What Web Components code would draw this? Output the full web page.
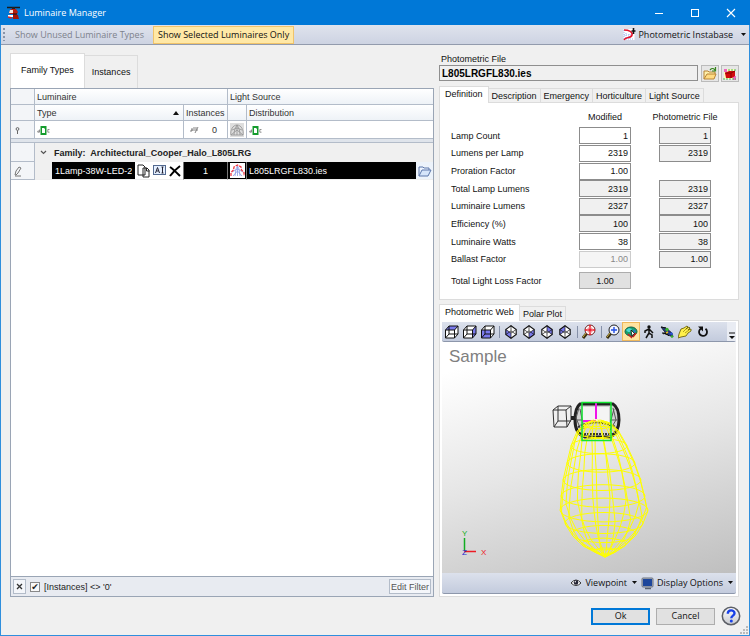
<!DOCTYPE html>
<html lang="en">
<head>
<meta charset="utf-8">
<title>Luminaire Manager</title>
<style>
html,body{margin:0;height:100%}
body{font:9px/12px "Liberation Sans",Arial,sans-serif;color:#111;background:#f0f0f0;--ui:"Open Sans","Noto Sans",sans-serif}
</style>
</head>
<body>
<luminaire-manager></luminaire-manager>
<script>
const isoCube=face=>`<path d="M6 .7L11.200 4.500v5L6 13.300.8 9.500v-5z" fill="#fff"/><path d="${face}" fill="#7a7aec"/><path d="M6 .7L11.200 4.500v5L6 13.300.8 9.500v-5z" fill="none" stroke="#111" stroke-width="1.100"/><path d="M.8 4.500L6 8l5.200-3.500M6 8v5.300M6 .7V6M.8 9.500L6 6l5.200 3.500" fill="none" stroke="#111" stroke-width=".7"/>`;
const cubeLines=`<path d="M1.500 5h9v8h-9zM5 1h9v8H5zM1.500 5L5 1M10.500 5L14 1M10.500 13L14 9M1.500 13L5 9" fill="none" stroke="#111"/>`;
const cubeBase=`<path d="M1.500 5L5 1h9v8l-3.500 4h-9z" fill="#fff"/>`;
const ICONS={
app:[13,13,`<path d="M0 1.500h13" stroke="#1a1a1a" stroke-width="1.500"/><path d="M5 1h3v2H5z" fill="#222"/><path d="M2 6l2-3h5l2 3-1 2H3z" fill="#b81e10"/><path d="M3 4h3v3H2z" fill="#f6e9e0"/><path d="M1 9h7v2H1z" fill="#fff"/><path d="M6 7l5 2 1 4H6z" fill="#a31509"/><path d="M1 11l4 1" stroke="#d22" stroke-width="1.500"/><path d="M6 8h4" stroke="#111"/>`],
min:[10,10,`<path d="M1 5.500h8" stroke="#fff"/>`],
max:[10,10,`<rect x="1.500" y="1.500" width="7" height="7" fill="none" stroke="#fff"/>`],
close:[10,10,`<path d="M1 1l8 8M9 1L1 9" stroke="#fff" stroke-width="1.100"/>`],
instabase:[13,13,`<rect x=".5" y="1" width="11" height="11" fill="#fff"/><path d="M1 2v9M3 5v5M6 6v5M1 11h9M1 7h8" stroke="#9bb4f2" stroke-dasharray="1 1"/><path d="M1 2c5 0 9 2 8 5-1 4-6 1-8 5" fill="none" stroke="#e3132c" stroke-width="1.600"/><path d="M10.500 0v6M8.500 3h4" stroke="#111" stroke-width="1.600"/>`],
caret:[6,4,`<path d="M0 0h5L2.500 3z" fill="#111"/>`],
up:[6,4,`<path d="M0 4L3 0l3 4z" fill="#111"/>`],
chev:[7,7,`<path d="M1 2l2.500 2.500L6 2" fill="none" stroke="#555" stroke-width="1.200"/>`],
pin:[7,7,`<circle cx="3.500" cy="2" r="1.400" fill="none" stroke="#666"/><path d="M3.500 3.500V7" stroke="#666"/>`],
pencil:[8,11,`<path d="M1 9l1-4 3-4 2 1-3 5-2 2zM1 10h6" fill="none" stroke="#777"/>`],
abc:[13,9,`<rect x="3.500" y="0" width="6" height="9" fill="#149b2d"/><path d="M5 2h2l1 1v4H5z" fill="#fff"/><path d="M2.500 3.500v2.700H.8V5H2.500M12.500 3.500h-1.700v2.700h1.700" fill="none" stroke="#777" stroke-width=".8"/>`],
ne:[9,8,`<path d="M2 2v3H0M1 4h7M3 2h4M5 7l3-6" fill="none" stroke="#777" stroke-width=".9"/>`],
polarGray:[14,14,`<rect width="14" height="14" fill="#dedede"/><path d="M1 12c-1-5 2-10 6-10s7 5 6 10zM4 12c0-4 1-7 3-10 2 3 3 6 3 10M2 7l5-2 5 2M1 12l6-5 6 5M7 2v10" fill="none" stroke="#999" stroke-width=".9"/>`],
polar:[15,15,`<rect width="15" height="15" fill="#fff"/><path d="M5 13l1-7 1.500-3L9 6l1 7M2 9l5.500-3L13 9M7.500 3v10M3 13l4.500-5 4.500 5" fill="none" stroke="#8a9ae4" stroke-width=".8"/><path d="M1 13V9.500L3.500 7 4 4l3.500-2L11 4l.5 3L14 9.500V13" fill="none" stroke="#f03540" stroke-width="1.300" stroke-dasharray="3 1"/>`],
copy:[13,14,`<path d="M1 1h5l2 2v8H1zM6 4h4l2 2v7H6z" fill="#fff" stroke="#222"/><path d="M9.500 4v3h3" fill="none" stroke="#222"/>`],
rename:[13,11,`<rect x=".5" y=".5" width="12" height="9" fill="#e4efff" stroke="#526990"/><path d="M2.500 8L4.500 2.500 6.500 8M3.500 6h2M9.500 2v6M8.500 2h2M8.500 8h2" fill="none" stroke="#223"/>`],
del:[12,12,`<path d="M1 2c3 2 5 4 10 9M11 1C7 4 4 7 1 11" fill="none" stroke="#000" stroke-width="2"/>`],
folderBlue:[14,12,`<path d="M1 11V2h4l1 1h5v3" fill="#edf4ff" stroke="#5c77aa"/><path d="M1 11l3-6h9l-3 6z" fill="#d6e5fa" stroke="#5c77aa"/>`],
folder:[14,14,`<path d="M1 12V4h4l1 1h6v3" fill="#fff0ac" stroke="#b88436"/><path d="M1 12l3-5h9l-2 5z" fill="#ffdb83" stroke="#b88436"/><path d="M7 3c2-2 3-2 5 0M12.500 0v4H9" fill="none" stroke="#37851d" stroke-width="1.200"/>`],
cubeRed:[14,14,`<path d="M1 2h11v10H1z" fill="#fffbbb"/><path d="M1 2h3v3H1zM10 9h3v4h-3z" fill="#ef65bd"/><path d="M2 6l4-2h6v5l-3 2H3z" fill="#d20b0b"/><path d="M2 6h6l4-2M8 6v5" fill="none" stroke="#8c0000"/><path d="M5 3h8M0 12h13" stroke="#48b85c" stroke-dasharray="2 1"/>`],
x:[7,7,`<path d="M1 1l5 5M6 1L1 6" stroke="#333" stroke-width="1.300"/>`],
cubeTop:[15,14,cubeBase+`<path d="M1.500 5L5 1h9l-3.500 4z" fill="#7a7aec"/>`+cubeLines],
cubeSide:[15,14,cubeBase+`<path d="M10.500 5L14 1v8l-3.500 4z" fill="#7a7aec"/>`+cubeLines],
cubeFront:[15,14,cubeBase+`<path d="M1.500 5h9v8h-9z" fill="#7a7aec"/>`+cubeLines],
iso1:[12,14,isoCube('M.8 4.500L6 8v5.300L.8 9.500z')],
iso2:[12,14,isoCube('M11.200 4.500L6 8v5.300l5.200-3.800z')],
iso3:[12,14,isoCube('M6 .7l5.200 3.800v5L6 6z')],
iso4:[12,14,isoCube('M6 .7L.8 4.500v5L6 6z')],
zoomExt:[14,15,`<path d="M1 14l4-5" stroke="#3b3010" stroke-width="3"/><path d="M1 13l3-4" stroke="#cfb54e"/><circle cx="8" cy="6" r="5" fill="#fff" stroke="#702020"/><path d="M8 1v10M3 6h10" stroke="#ee1525" stroke-width="1.500"/><circle cx="8" cy="6" r="2.500" fill="none" stroke="#f0727a"/>`],
zoom:[14,15,`<path d="M1 14l4-5" stroke="#3b3010" stroke-width="3"/><path d="M1 13l3-4" stroke="#cfb54e"/><circle cx="8" cy="6" r="5" fill="#f3f6ff" stroke="#222"/><path d="M8 3v6M5 6h6" stroke="#224fe5" stroke-width="1.400"/>`],
orbit:[14,14,`<ellipse cx="7" cy="6.500" rx="6" ry="4.500" fill="#16a06c" stroke="#14614a"/><path d="M2 5l3-2 3 1-2 3H4z" fill="#49d6cf"/><path d="M9 4l3 2-2 2z" fill="#2d6fd0"/><path d="M7 5l4 4-2 .5-1 2.500z" fill="#fff" stroke="#111" stroke-width=".8"/><path d="M4 9l4 4M12 8l-3 4" fill="none" stroke="#d01e1e" stroke-width="1.400"/>`],
walk:[10,14,`<circle cx="5" cy="2" r="1.700" fill="#111"/><path d="M5 4v5M1 8V6l4-2 4 4M5 8l-3 5M5 8l3 2v3" fill="none" stroke="#111" stroke-width="1.500"/>`],
fly:[14,14,`<path d="M1 2l5 1 6 5 1 4-5-2-4-4z" fill="#26377f" stroke="#17202e" stroke-width=".8"/><path d="M1 2l5 1M2 8h4l3 3M3 9l2-1" stroke="#111"/><circle cx="7" cy="4.500" r="1.700" fill="#39b32d"/><path d="M9 9l3-2 1 3z" fill="#2a57e0"/><path d="M6 8l2-1" stroke="#e8bb1c" stroke-width="1.500"/><path d="M11 12l2-1" stroke="#39b32d" stroke-width="2"/>`],
hand:[14,14,`<path d="M1 9l2-5 3-1 3-2 1 1-2 2 3-2 1 1-2 2 3-1v2l-3 2-2 3-5 1-3 1z" fill="#fff04a" stroke="#6d6310" stroke-width=".9"/><path d="M5 7l3-3M7 8l4-3" stroke="#9c8c14" stroke-width=".8"/>`],
rotate:[12,13,`<path d="M4 3.500a4 4 0 1 0 4.500.3" fill="none" stroke="#111" stroke-width="1.800"/><path d="M1 1.500h5v5z" fill="#111"/>`],
more:[8,9,`<path d="M1 2h6" stroke="#111"/><path d="M1 5h6L4 8z" fill="#111"/>`],
eye:[12,10,`<path d="M1 5q5-6 10 0-5 5-10 0z" fill="#fff" stroke="#333"/><circle cx="6" cy="4.500" r="2.300" fill="#223"/><circle cx="5.300" cy="3.800" r=".7" fill="#fff"/>`],
screen:[13,13,`<rect x="1" y="1" width="11" height="9" rx="1" fill="#aeb4bf" stroke="#6b7380"/><rect x="2" y="2" width="9" height="7" fill="#1d469b"/><path d="M4 11.500h6" stroke="#596270" stroke-width="1.500"/>`],
help:[20,20,`<defs><linearGradient id="g" x2="0" y2="1"><stop stop-color="#fff"/><stop offset="1" stop-color="#c7c9ce"/></linearGradient></defs><circle cx="10" cy="10" r="8.700" fill="url(#g)" stroke="#5c5f66" stroke-width="1.500"/><path d="M6.800 7.800c0-4.500 6.700-4.300 6.700-.6 0 2.500-3.200 2.300-3.200 5" fill="none" stroke="#1740e8" stroke-width="2.400"/><circle cx="10.300" cy="15" r="1.500" fill="#1740e8"/>`],
grip:[8,8,`<path d="M6 0h2v2H6zM3 3h2v2H3zM6 3h2v2H6zM0 6h2v2H0zM3 6h2v2H3zM6 6h2v2H6z" fill="#bbb"/>`]
};
const controls='button{font:inherit;color:inherit;margin:0;padding:0;border:0;background:none;display:inline-flex;align-items:center;justify-content:center;white-space:nowrap}input{font:inherit;color:inherit;min-width:0;margin:0}';
const define=(name,html,setup,base=controls)=>{
  const t=document.createElement('template');
  t.innerHTML='<style>*{box-sizing:border-box}'+base+'</style>'+html;
  customElements.define(name,class extends HTMLElement{
    constructor(){super();this.attachShadow({mode:'open'}).append(t.content.cloneNode(true));if(setup)setup(this,this.shadowRoot)}
  });
};
customElements.define('ui-icon',class extends HTMLElement{
  static observedAttributes=['name'];
  constructor(){super();this.attachShadow({mode:'open'})}
  attributeChangedCallback(){
    const [w,h,s]=ICONS[this.getAttribute('name')];
    this.shadowRoot.innerHTML=`<style>:host{display:inline-flex;flex:none}svg{display:block}</style><svg width="${w}" height="${h}" viewBox="0 0 ${w} ${h}" aria-hidden="true">${s}</svg>`;
  }
});

define('title-bar',`<style>
:host{display:flex;align-items:center;height:25px;background:#0078d7;color:#fff;font-family:var(--ui);padding:0 8px 0 7px;gap:4px}
h1{font:inherit;font-weight:400;margin:0;flex:1}
button{width:36px;height:24px}
.c{display:flex;margin-right:-7px}
</style><ui-icon name="app"></ui-icon><h1><slot></slot></h1><div class="c"><button aria-label="Minimize"><ui-icon name="min"></ui-icon></button><button aria-label="Maximize"><ui-icon name="max"></ui-icon></button><button aria-label="Close"><ui-icon name="close"></ui-icon></button></div>`);

define('command-bar',`<style>
:host{display:flex;align-items:center;height:20px;background:linear-gradient(#dfe3ed,#cdd3e2);border-bottom:1px solid #929bad;font-family:var(--ui);padding:0 2px;color:#111}
.grip{width:2px;height:13px;background:repeating-linear-gradient(#8a94a8 0 2px,transparent 2px 4px);margin-right:7px}
button{height:18px;padding:0 3px}
.off{color:#7d828c;margin-right:6px}
.on{background:#ffe8a6;border:1px solid #f0c36a;padding:0 4px}
.r{margin-left:auto;gap:2px;padding:0}
.r ui-icon+span+ui-icon{margin-left:6px}
</style><span class="grip"></span><button class="off" disabled>Show Unused Luminaire Types</button><button class="on" aria-pressed="true">Show Selected Luminaires Only</button><button class="r"><ui-icon name="instabase"></ui-icon><span>Photometric Instabase</span><ui-icon name="caret"></ui-icon></button>`);

define('tab-strip',`<style>
:host{display:flex;align-items:flex-end;height:16px}
::slotted(button){font:inherit;color:inherit;margin:0;height:14px;padding:0 3px;border:1px solid #dcdcdc;border-bottom:0;border-left-width:0;background:#f0f0f0;white-space:nowrap;box-sizing:border-box}
::slotted(button[aria-selected=true]){height:17px;padding:0 5px 2px;border-left-width:1px;background:#fff;margin-bottom:-1px;position:relative}
:host([large]){height:35px}
:host([large]) ::slotted(button){height:33px;padding:0 7px}
:host([large]) ::slotted(button[aria-selected=true]){height:35px;padding:0 10px 2px;margin:0}
</style><slot></slot>`,h=>h.setAttribute('role','tablist'));

define('luminaire-grid',`<style>
:host{display:flex;flex-direction:column;background:#fff;border:1px solid #9aa5b5;flex:1;min-height:0;color:#333}
table{border-collapse:separate;border-spacing:0;table-layout:fixed;width:100%}
td,th{padding:0 2px;border-right:1px solid #b3bcc9;border-bottom:1px solid #b3bcc9;font-weight:400;text-align:left;white-space:nowrap;overflow:hidden}
tr>:last-child{border-right:0}
th{height:16px;background:linear-gradient(#fff,#eef2f7)}
.ind{background:#f3f5f8;text-align:center;padding:0}
.ind ui-icon,.ic ui-icon{vertical-align:middle}
.ind ui-icon{margin-right:10px}
.f td{height:18px}
.f td>ui-icon{vertical-align:middle}
.f .ic,.ic{padding:0;text-align:center}
.gap td{height:4px;background:#dfe4eb;border-right:0}
.g td{height:19px}
.g td+td{background:#f0f0f0;font-weight:700;color:#222;border-bottom:0}
.d td{height:18px;border-bottom:1px solid #b3bcc9}
.d td+td{background:#000;color:#fff;border-right-color:#777;border-bottom-color:#eee}
.row{display:flex;align-items:center}
.sort{justify-content:space-between;padding-right:2px}
.g .row{gap:7px;padding-left:3px}
.d .e{padding:0 0 0 17px;background:#f0f0f0!important}
.e input{flex:1;height:17px;border:0;outline:0;padding:0 3px;background:#000;color:#fff}
.e button{width:16px;height:17px;background:#fff}
.n{text-align:center!important}
.last{padding-right:0!important}
.last .row{justify-content:space-between}
.last button{width:17px;height:17px;background:#edf3fb}
footer{margin-top:auto;height:20px;border-top:1px solid #9aa5b5;background:#e8ebf1;display:flex;align-items:center;gap:4px;padding:1px 2px;color:#222}
footer button{border:1px solid #b3bcc9;background:#f4f6fa;height:15px;width:13px}
footer .ef{width:auto;padding:0 1px;margin-left:auto;color:#555}
footer label{display:flex;align-items:center;gap:4px}
input[type=checkbox]{appearance:none;width:10px;height:10px;border:1px solid #888;background:#f8f8f8;display:flex;align-items:center;justify-content:center}
input[type=checkbox]:checked::after{content:"✔";font:9px/8px "DejaVu Sans",sans-serif;color:#222}
</style>
<table><colgroup><col style="width:24px"><col style="width:149px"><col style="width:44px"><col style="width:19px"><col></colgroup>
<thead><tr><th class="ind"></th><th colspan="2">Luminaire</th><th colspan="2">Light Source</th></tr>
<tr><th class="ind"></th><th><div class="row sort">Type<ui-icon name="up"></ui-icon></div></th><th>Instances</th><th></th><th>Distribution</th></tr></thead>
<tbody><tr class="f"><td class="ind"><ui-icon name="pin"></ui-icon></td><td><ui-icon name="abc"></ui-icon></td><td><div class="row" style="gap:13px;padding-left:4px"><ui-icon name="ne"></ui-icon>0</div></td><td class="ic"><ui-icon name="polarGray"></ui-icon></td><td><ui-icon name="abc"></ui-icon></td></tr>
<tr class="gap"><td colspan="5"></td></tr>
<tr class="g"><td class="ind"></td><td colspan="4"><div class="row"><ui-icon name="chev"></ui-icon>Family:&nbsp; Architectural_Cooper_Halo_L805LRG</div></td></tr>
<tr class="d"><td class="ind"><ui-icon name="pencil"></ui-icon></td><td class="e"><div class="row"><input aria-label="Type" value="1Lamp-38W-LED-277V"><button aria-label="Copy"><ui-icon name="copy"></ui-icon></button><button aria-label="Rename"><ui-icon name="rename"></ui-icon></button><button aria-label="Delete"><ui-icon name="del"></ui-icon></button></div></td><td class="n">1</td><td class="ic"><ui-icon name="polar"></ui-icon></td><td class="last"><div class="row">L805LRGFL830.ies<button aria-label="Browse"><ui-icon name="folderBlue"></ui-icon></button></div></td></tr></tbody></table>
<footer><button aria-label="Clear filter"><ui-icon name="x"></ui-icon></button><label><input type="checkbox" checked>[Instances] &lt;&gt; '0'</label><button class="ef">Edit Filter</button></footer>`);

define('photometric-file',`<style>
:host{display:grid;grid-template-columns:1fr 18px 18px;column-gap:2px;align-items:start}
label{grid-column:1/-1;padding-left:2px;line-height:12px}
input{height:16px;border:1px solid #8f8f8f;background:#f0f0f0;font-weight:700;font-size:10px;padding:0 2px;margin-right:1px;color:#000}
button{width:18px;height:17px;border:1px solid #bbb;background:#e6e6e6}
</style><label for="f">Photometric File</label><input id="f" readonly value="L805LRGFL830.ies"><button aria-label="Open file"><ui-icon name="folder"></ui-icon></button><button aria-label="Edit file"><ui-icon name="cubeRed"></ui-icon></button>`);

define('definition-form',`<style>
:host{display:block;background:#fff;border:1px solid #dcdcdc;padding:6px 10px 10px 11px}
.r,.h{display:grid;grid-template-columns:100px 52px 52px;column-gap:28px;align-items:center}
.h{height:16px}
.h span{text-align:center;white-space:nowrap;justify-self:center}
.h span:first-of-type{grid-column:2}
#rows{display:grid;grid-template-rows:repeat(8,1fr);height:141px;margin-top:2px}
input{height:17px;width:52px;text-align:right;padding:0 2px;border:1px solid #8c8c8c;background:#fff}
input[readonly]{background:#f0f0f0}
input:disabled{color:#888;border-color:#ccc;background:#f5f5f5}
.t{margin-top:4px}
.t button{width:52px;height:17px;border:1px solid #adadad;background:#e1e1e1}
</style><div class="h"><span>Modified</span><span>Photometric File</span></div><div id="rows"></div><div class="r t"><span>Total Light Loss Factor</span><button>1.00</button></div>`,(h,s)=>{
  const rows=[['Lamp Count','1','','1'],['Lumens per Lamp','2319','','2319'],['Proration Factor','1.00','',''],['Total Lamp Lumens','2319','readonly','2319'],['Luminaire Lumens','2327','readonly','2327'],['Efficiency (%)','100','readonly','100'],['Luminaire Watts','38','','38'],['Ballast Factor','1.00','disabled','1.00']];
  s.getElementById('rows').innerHTML=rows.map(([l,a,m,b],i)=>`<div class="r"><label for="m${i}">${l}</label><input id="m${i}" value="${a}" ${m}>${b?`<input readonly aria-label="${l}, photometric file" value="${b}">`:''}</div>`).join('');
});

define('web-viewer',`<style>
:host{display:flex;flex-direction:column;flex:1;min-height:0;background:#fff;border:1px solid #dcdcdc;padding:1px 2px 2px}
.bar{display:flex;align-items:center;height:20px;background:linear-gradient(#dce1ec,#c3cbdd);border-bottom:1px solid #8d97ab;border-radius:0 0 2px 2px;flex:none}
.bar button{width:18px;height:19px;flex:none}
.top i{width:1px;height:12px;background:#8590a8;margin:0 2px 0 3px}
.top .on{background:#ffe3a0;border:1px solid #efb85c}
.top .more{margin-left:auto;width:9px;align-items:flex-end;background:#e9ecf3;padding-bottom:1px}
.view{flex:1;min-height:0;background:linear-gradient(165deg,#fff 10%,#e6e6e6 50%,#bfbfbf);display:grid;grid-template:minmax(0,1fr)/minmax(0,1fr)}
.view>*{grid-area:1/1}
.view p{margin:5px 7px;font-size:17px;line-height:20px;color:#808080}
svg.web{width:100%;height:100%;display:block;contain:size}
.bot{height:21px;justify-content:flex-end;font-family:var(--ui);gap:3px;padding-right:2px}
.bot button{width:auto;gap:3px;color:#111}
.bot ui-icon:last-child{margin-left:2px}
</style><div class="bar top" role="toolbar" id="bar"></div>
<div class="view"><svg class="web" viewBox="0 0 294 231" role="img" aria-label="Photometric web"><g id="lamp" fill="none"></g><g id="lobe" fill="none" stroke="#ff0" stroke-width="1"></g>
<path d="M140 60.500h29v38h-29z" fill="none" stroke="#12e632" stroke-width="1.500"/>
<path d="M22.500 209v-13" stroke="#12ad22" stroke-width="1.500"/><path d="M22 209.500h12" stroke="#ed1b24" stroke-width="1.500"/>
<g font-family="Liberation Sans,sans-serif" font-size="8"><text x="20" y="194" fill="#12ad22">Y</text><text x="39" y="213" fill="#ed1b24">X</text><text x="20" y="213" fill="#2428d0">Z</text></g></svg><p>Sample</p></div>
<div class="bar bot"><button><ui-icon name="eye"></ui-icon>Viewpoint<ui-icon name="caret"></ui-icon></button><button><ui-icon name="screen"></ui-icon>Display Options<ui-icon name="caret"></ui-icon></button></div>`,(h,s)=>{
  const tools=['cubeTop','cubeSide','cubeFront','|','iso1','iso2','iso3','iso4','|','zoomExt','|','zoom','orbit','walk','fly','hand','rotate'];
  s.getElementById('bar').innerHTML=tools.map(n=>n=='|'?'<i></i>':`<button aria-label="${n}"${n=='orbit'?' class="on"':''}><ui-icon name="${n}"></ui-icon></button>`).join('')+'<button class="more" aria-label="More"><ui-icon name="more"></ui-icon></button>';
  // Lobe profile: [height, centre x, radius]
  const P=[[79,155,5],[83,156,14],[90,156,21],[104,157,28],[121,159,34],[138,160,39],[154,161,42],[168,162,44],[181,162,39],[192,162,32],[202,162,22],[209,163,11],[215,163,0]];
  let o='';
  for(let k=0;k<16;k++){const a=(k+.35)*Math.PI/8;
    o+='<path d="M'+P.map(([y,c,r])=>(c+r*Math.cos(a)).toFixed(1)+' '+(y+r*.27*Math.sin(a)).toFixed(1)).join('L')+'"/>'}
  for(const [y,c,r] of P.slice(1,12))o+=`<ellipse cx="${c}" cy="${y}" rx="${r}" ry="${(r*.27).toFixed(1)}"/>`;
  s.getElementById('lobe').innerHTML=o;
  s.getElementById('lamp').innerHTML='<path d="M111 68l5-4h13v14l-4 7h-13zM111 68h13l5-4M124 68l1 17M116 64v15h13M116 79l-4 6" stroke="#333"/><path d="M129 76h4" stroke="#222" stroke-width="4"/><path d="M138 62h33c5 3 6 9 6 16s-3 15-9 17h-25c-7-2-10-9-10-17s1-13 5-16z" fill="#d2d2d2" stroke="#222" stroke-width="3"/><path d="M141 65h26v15h-26z" fill="#f4f4f4"/><path d="M137 66l-3 10 5 12M171 66l3 12-6 10M134 78h6M168 78h8M138 67l4 20M172 67l-5 18" stroke="#555"/><path d="M136 85q18-9 38 0M136 92h37" stroke="#333" stroke-width="2" stroke-dasharray="2 1"/><path d="M154 61v16M140 79h14" stroke="#f014e8" stroke-width="2"/>';
});

define('dialog-actions',`<style>
:host{display:flex;justify-content:flex-end;align-items:center;gap:6px;height:38px;padding-right:8px;font-family:var(--ui);flex:none;position:relative}
button{width:59px;height:17px;border:1px solid #adadad;background:#e1e1e1}
.ok{border:2px solid #0078d7}
.help{width:20px;height:20px;border:0;background:none}
.grip{position:absolute;right:1px;bottom:1px}
</style><button class="ok">Ok</button><button>Cancel</button><button class="help" aria-label="Help"><ui-icon name="help"></ui-icon></button><ui-icon class="grip" name="grip"></ui-icon>`);

define('luminaire-manager',`<style>
:host{display:flex;flex-direction:column;min-height:100vh;background:#f0f0f0}
.win{flex:1;display:flex;flex-direction:column;border:1px solid #2f8fdd;border-top:0}
main{flex:1;display:grid;grid-template-columns:424fr 300fr;gap:5px;padding:8px 10px 0 9px}
section{display:flex;flex-direction:column;min-width:0}
photometric-file{margin-bottom:4px}
definition-form{margin-bottom:4px}
</style><title-bar>Luminaire Manager</title-bar><div class="win"><command-bar></command-bar><main>
<section><tab-strip large><button role="tab" aria-selected="true">Family Types</button><button role="tab">Instances</button></tab-strip><luminaire-grid></luminaire-grid></section>
<section><photometric-file></photometric-file><tab-strip><button role="tab" aria-selected="true">Definition</button><button role="tab">Description</button><button role="tab">Emergency</button><button role="tab">Horticulture</button><button role="tab">Light Source</button></tab-strip><definition-form></definition-form>
<tab-strip><button role="tab" aria-selected="true">Photometric Web</button><button role="tab">Polar Plot</button></tab-strip><web-viewer></web-viewer></section>
</main><dialog-actions></dialog-actions></div>`,null,'');
</script>
</body>
</html>
